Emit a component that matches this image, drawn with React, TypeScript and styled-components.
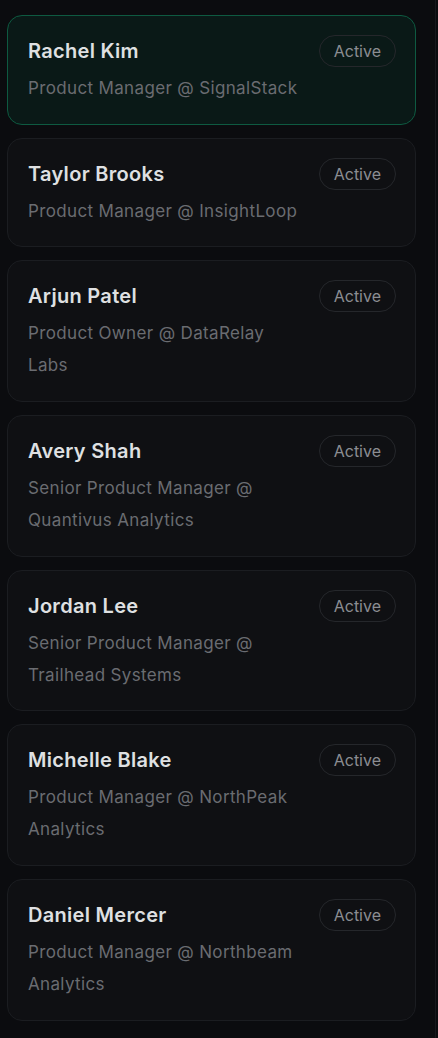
import React from 'react';
import styled, {createGlobalStyle} from "styled-components";

type Person = {
    name: string,
    role: string,
}

const people: Person[] = [
    {name: 'Rachel Kim', role: 'Product Manager @ SignalStack'},
    {name: 'Taylor Brooks', role: 'Product Manager @ InsightLoop'},
    {name: 'Arjun Patel', role: 'Product Owner @ DataRelay Labs'},
    {name: 'Avery Shah', role: 'Senior Product Manager @ Quantivus Analytics'},
    {name: 'Jordan Lee', role: 'Senior Product Manager @ Trailhead Systems'},
    {name: 'Michelle Blake', role: 'Product Manager @ NorthPeak Analytics'},
    {name: 'Daniel Mercer', role: 'Product Manager @ Northbeam Analytics'},
];

const App = (): JSX.Element => {
    return (
        <>
            <GlobalStyle />
            <Panel>
                <List>
                    {people.map((p, i) => (
                        <Card key={p.name} $selected={i === 0}>
                            <Info>
                                <Name>{p.name}</Name>
                                <Role>{p.role}</Role>
                            </Info>
                            <Badge>Active</Badge>
                        </Card>
                    ))}
                </List>
            </Panel>
        </>
    );
}

// styles
const GlobalStyle = createGlobalStyle`
  html, body {
    margin: 0;
    padding: 0;
    background: #0b0c0f;
  }
  body {
    font-family: Inter, "Noto Sans", sans-serif;
    -webkit-font-smoothing: antialiased;
  }
`

export const Panel = styled.div`
  width: 436px;
  min-height: 1038px;
  box-sizing: border-box;
  border-right: 1px solid #17191d;
  padding: 15px 19px 18px 7px;
`

export const List = styled.div`
  display: flex;
  flex-direction: column;
  gap: 13px;
`

export const Card = styled.div<{ $selected: boolean }>`
  display: flex;
  align-items: flex-start;
  gap: 16px;
  padding: 19px 19px 19.7px 20px;
  border-radius: 15px;
  background: ${p => p.$selected ? '#0a1917' : '#0f1013'};
  border: 1px solid ${p => p.$selected ? '#0e5a41' : '#1b1d21'};
`

export const Info = styled.div`
  flex: 1;
  min-width: 0;
  display: flex;
  flex-direction: column;
  gap: 5px;
`

export const Name = styled.div`
  font-size: 20px;
  font-weight: 600;
  line-height: 32px;
  letter-spacing: 0.3px;
  color: #dfe0e2;
`

export const Role = styled.div`
  font-size: 17px;
  line-height: 32px;
  color: #6a6c71;
  letter-spacing: 0.35px;
`

export const Badge = styled.span`
  flex-shrink: 0;
  height: 32px;
  box-sizing: border-box;
  display: inline-flex;
  align-items: center;
  padding: 0 14px;
  border-radius: 999px;
  border: 1px solid #25272b;
  font-size: 16px;
  color: #8b8d92;
`

export default App;
